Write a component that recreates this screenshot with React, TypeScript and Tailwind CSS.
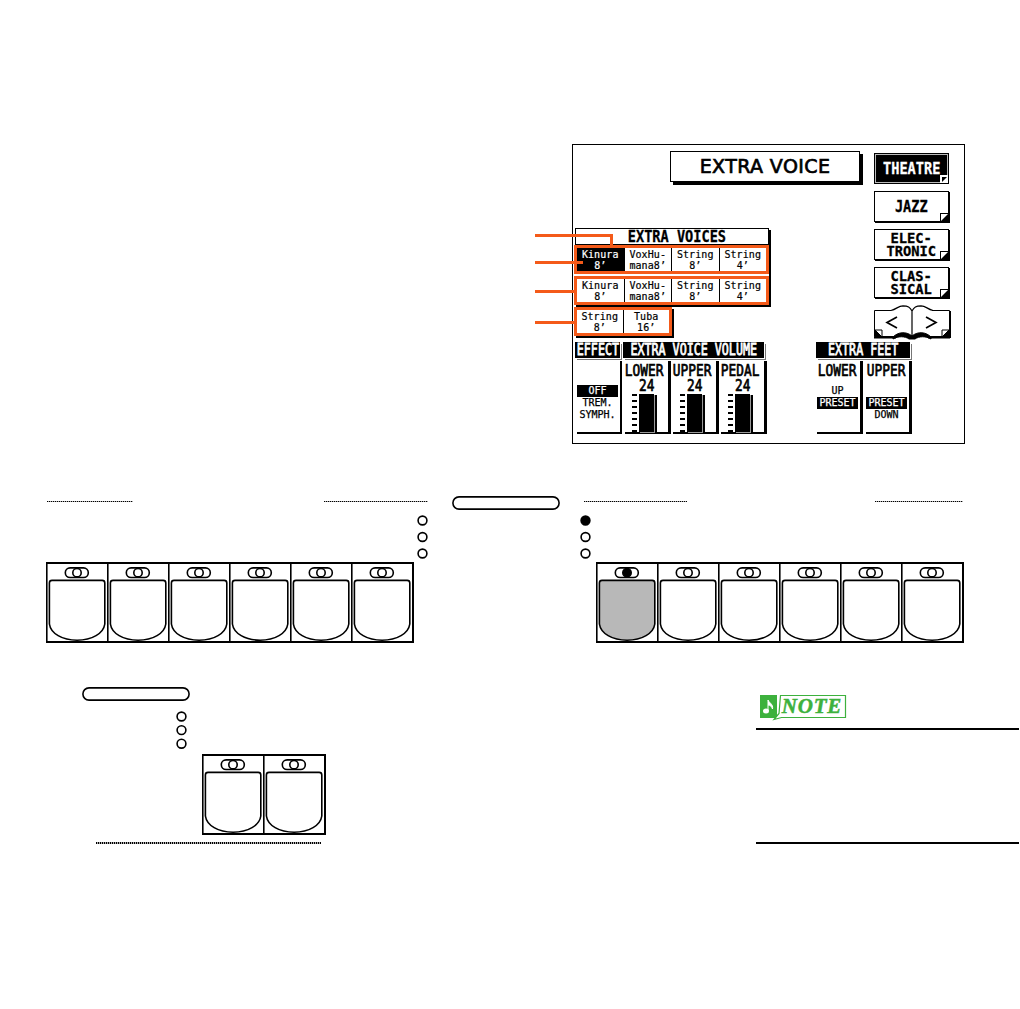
import clsx from "clsx";

const VOICE_ROWS = [
  [["Kinura", "8’"], ["VoxHu-", "mana8’"], ["String", "8’"], ["String", "4’"]],
  [["Kinura", "8’"], ["VoxHu-", "mana8’"], ["String", "8’"], ["String", "4’"]],
  [["String", "8’"], ["Tuba", "16’"]],
];

const MENU = [["THEATRE"], ["JAZZ"], ["ELEC-", "TRONIC"], ["CLAS-", "SICAL"]];

function VoiceRow({ row, index }: { row: string[][]; index: number }) {
  return (
    <div
      className={clsx(
        "flex h-[29px] border-[3px] border-[#f45a19] bg-white",
        index === 2
          ? "mt-[2px] w-[98px] shadow-[2px_2px_0_#000]"
          : "w-[195px]",
        index === 1 && "mt-[2px]"
      )}
    >
      {row.map((lines, i) => (
        <div
          key={i}
          className={clsx(
            "flex min-w-0 flex-1 flex-col items-center justify-center whitespace-nowrap text-[10px] leading-[11px] tracking-[0.1px] [-webkit-text-stroke:0.2px]",
            i > 0 && "border-l border-black",
            index === 0 && i === 0 && "bg-black text-white"
          )}
        >
          {lines.map((l) => (
            <span key={l}>{l}</span>
          ))}
        </div>
      ))}
    </div>
  );
}

function Corner({ dark }: { dark?: boolean }) {
  return (
    <svg className="absolute right-0 bottom-0" width="8" height="8">
      <rect width="8" height="8" fill={dark ? "#fff" : "#000"} />
      <rect x="1" y="1" width="7" height="7" fill="#fff" />
      <path d={dark ? "M2 2H7L2 7Z" : "M8 1V8H1Z"} fill="#000" />
    </svg>
  );
}

function MenuButton({ lines, active }: { lines: string[]; active?: boolean }) {
  return (
    <div
      className={clsx(
        "relative flex h-[31px] w-[75px] flex-col items-center justify-center border border-black font-bold",
        lines.length > 1 ? "text-[14px] leading-[13px]" : "text-[16px] leading-[16px]",
        active
          ? "bg-black text-white outline outline-offset-[-2px] outline-[#bbb]"
          : "bg-white shadow-[1px_1px_0_#000]"
      )}
    >
      {lines.map((l) => (
        <span
          key={l}
          className={clsx(
            "[-webkit-text-stroke:0.3px]",
            lines.length > 1 ? "scale-x-[0.98]" : "scale-x-[0.85]"
          )}
        >
          {l}
        </span>
      ))}
      <Corner dark={active} />
    </div>
  );
}

function Book() {
  return (
    <svg width="77" height="36" viewBox="0 0 77 36" fill="none" stroke="#000">
      <path d="M17 5.5H.5V31.5H20M58 5.5H75.5V31.5H56" />
      <path d="M76 6V33M0 32.5H22M54 32.5H76" strokeWidth="2" />
      <path d="M17 5.5C23 4 24 1 29 .8C34 .8 36 2 38 6C40 2 42 .8 47 .8C52 1 53 4 59 5.5M38 6V32" strokeWidth="1.2" />
      <path d="M19 32C24 27 32 26 38 31C44 26 52 27 57 32V34C52 31 45 31 41 34H35C31 31 24 31 19 34Z" fill="#000" />
      <path d="M23 12L13 17.5L23 23M52 12L62 17.5L52 23" strokeWidth="1.7" />
      <path d="M1 25H8V32" />
      <path d="M1 25L8 32H1Z" fill="#000" />
      <path d="M68 32V25H75" />
      <path d="M75 25V32H68Z" fill="#000" />
    </svg>
  );
}

function Heading({ text, className }: { text: string; className: string }) {
  return (
    <div
      className={clsx(
        "flex h-4 items-center justify-center bg-black text-[16px] text-white shadow-[1px_1px_0_#fff,2px_2px_0_#777]",
        className
      )}
    >
      <span className="scale-x-[0.73] whitespace-nowrap [-webkit-text-stroke:0.8px_white]">
        {text}
      </span>
    </div>
  );
}

function Title({ text }: { text: string }) {
  return (
    <div className="flex h-[15px] items-center justify-center text-[16px] leading-[15px]">
      <span className="scale-x-[0.8] [-webkit-text-stroke:0.7px_black]">{text}</span>
    </div>
  );
}

function Options({ items, selected }: { items: string[]; selected: string }) {
  return (
    <>
      {items.map((item) => (
        <div
          key={item}
          className={clsx(
            "mr-[2px] flex h-3 items-center justify-center text-[10px] leading-3 [-webkit-text-stroke:0.25px]",
            item === selected && "bg-black text-white"
          )}
        >
          {item}
        </div>
      ))}
    </>
  );
}

function Slider({ name }: { name: string }) {
  return (
    <div className="h-[73px] w-[46px] border-r-[3px] border-b-[2px] border-black pt-[2px]">
      <div className="mr-1">
        <Title text={name} />
      </div>
      <Title text="24" />
      <div className="mt-[1px] ml-[7px] flex gap-[2px]">
        <div className="flex flex-col gap-1">
          {[0, 1, 2, 3, 4, 5, 6].map((t) => (
            <i key={t} className="block h-[2px] w-[5px] bg-black" />
          ))}
        </div>
        <div className="h-[38px] w-[15px] bg-black shadow-[1px_1px_0_#999,3px_1px_0_#000]" />
      </div>
    </div>
  );
}

// Lines that tie the voice table to the labels on its left
function Leaders() {
  return (
    <svg
      className="absolute top-[84px] -left-[38px]"
      width="90"
      height="110"
      fill="none"
      stroke="#f45a19"
      strokeWidth="3"
    >
      <path d="M0 6.5H76.5V18M0 33.5H48M0 62.5H40M0 93.5H40" />
    </svg>
  );
}

function Display() {
  return (
    <section className="relative ml-[572px] h-[300px] w-[393px] border border-black font-['DejaVu_Sans_Mono',monospace]">
      <div className="flex h-[197px]">
        <div className="w-[301px] pt-[6px]">
          <h1 className="ml-[97px] flex h-[31px] w-[190px] items-center justify-center border border-black font-['DejaVu_Sans',sans-serif] text-[19px] tracking-[0.4px] shadow-[3px_3px_0_#000] [-webkit-text-stroke:0.7px_black]">
            EXTRA VOICE
          </h1>
          <div className="mt-[46px] ml-[1px] h-[77px] w-[195px] bg-white shadow-[2px_2px_0_#000]">
            <h2 className="ml-[1px] flex h-[17px] items-center justify-center border border-black bg-white text-[16px] font-bold">
              <span className="scale-x-[0.85] pl-3 whitespace-nowrap [-webkit-text-stroke:0.3px]">
                EXTRA VOICES
              </span>
            </h2>
            {VOICE_ROWS.map((row, i) => (
              <VoiceRow key={i} row={row} index={i} />
            ))}
          </div>
        </div>
        <div className="flex flex-col gap-[7px] pt-2">
          {MENU.map((lines, i) => (
            <MenuButton key={i} lines={lines} active={i === 0} />
          ))}
          <Book />
        </div>
      </div>

      <div className="flex pl-[2px]">
        <div className="w-[48px]">
          <Heading text="EFFECT" className="w-[45px]" />
          <div className="mt-[3px] ml-[2px] h-[73px] w-[45px] border-r-[2px] border-b-[2px] border-black pt-6">
            <Options items={["OFF", "TREM.", "SYMPH."]} selected="OFF" />
          </div>
        </div>
        <div className="w-[193px]">
          <Heading text="EXTRA VOICE VOLUME" className="w-[141px]" />
          <div className="mt-[3px] ml-[2px] flex gap-[2px]">
            <Slider name="LOWER" />
            <Slider name="UPPER" />
            <Slider name="PEDAL" />
          </div>
        </div>
        <div className="w-[98px]">
          <Heading text="EXTRA FEET" className="w-[94px]" />
          <div className="mt-[3px] ml-[1px] flex gap-[3px]">
            <div className="h-[73px] w-[46px] border-r-[3px] border-b-[2px] border-black pt-[2px]">
              <div className="mr-[3px]">
                <Title text="LOWER" />
              </div>
              <div className="pt-[7px]">
                <Options items={["UP", "PRESET"]} selected="PRESET" />
              </div>
            </div>
            <div className="h-[73px] w-[46px] border-r-[3px] border-b-[2px] border-black pt-[2px]">
              <div className="mr-[3px]">
                <Title text="UPPER" />
              </div>
              <div className="pt-[19px]">
                <Options items={["PRESET", "DOWN"]} selected="PRESET" />
              </div>
            </div>
          </div>
        </div>
      </div>
      <Leaders />
    </section>
  );
}

function Key({ on }: { on?: boolean }) {
  return (
    <svg width="61" height="80" fill="none" stroke="#000" strokeWidth="1.6">
      <path d="M.8 0V80" strokeWidth="1.6" />
      <rect x="19.3" y="5.9" width="23" height="9.6" rx="4.8" />
      <circle cx="31" cy="10.7" r="4.2" fill={on ? "#000" : "none"} />
      <path
        d="M3.4 21Q3.4 18.4 6 18.4H56.2Q58.8 18.4 58.8 21V62C57.5 71.5 46 78.2 31.1 78.2C16.2 78.2 4.7 71.5 3.4 62Z"
        fill={on ? "#b8b8b8" : "#fff"}
      />
    </svg>
  );
}

function Keys({ count, active }: { count: number; active?: number }) {
  return (
    <div className="flex h-[81px] border-y-2 border-r-2 border-black">
      {Array.from({ length: count }, (_, i) => (
        <div key={i} className="-mt-[2px] h-[80px]">
          <Key on={i === active} />
        </div>
      ))}
    </div>
  );
}

function Lamps({ pitch, on }: { pitch: number; on?: boolean }) {
  return (
    <svg width="11" height={pitch * 2 + 11} fill="none" stroke="#000" strokeWidth="1.6">
      {[0, 1, 2].map((i) => (
        <circle key={i} cx="5.5" cy={5.5 + i * pitch} r="4.4" fill={on && i === 0 ? "#000" : "none"} />
      ))}
    </svg>
  );
}

function Dots({ className }: { className: string }) {
  return (
    <div
      className={clsx(
        "bg-[repeating-linear-gradient(90deg,#000_0_1px,#aaa_1px_2px)]",
        className
      )}
    />
  );
}

function Pill() {
  return (
    <svg width="108" height="14" fill="none" stroke="#000" strokeWidth="1.6">
      <rect x=".9" y=".9" width="106.2" height="12.2" rx="6.1" />
    </svg>
  );
}

function NoteBadge() {
  return (
    <div className="ml-1 flex h-[26px] w-[86px]">
      <svg width="18" height="26">
        <rect y="1" width="17" height="23" fill="#3db13d" />
        <ellipse cx="6" cy="17" rx="3" ry="2.5" fill="#fff" />
        <path d="M8 17V6C9 9 13.5 10 12.5 15C11.5 12 10 11 8 11" fill="#fff" stroke="#fff" />
      </svg>
      <div className="relative flex h-[26px] w-[68px] items-center justify-center">
        <svg
          className="absolute inset-0 overflow-visible"
          width="68"
          height="26"
          fill="none"
          stroke="#3db13d"
          strokeWidth="1.2"
        >
          <path d="M2.5 1.5H67.5V23.5H3.5L-4 25.5L1 19.5Z" fill="#fff" />
        </svg>
        <span className="relative -mt-[2px] font-['Liberation_Serif',serif] text-[21px] leading-none font-bold tracking-[0.8px] text-[#3db13d] italic [-webkit-text-stroke:0.5px_#3db13d]">
          NOTE
        </span>
      </div>
    </div>
  );
}

export default function App() {
  return (
    <main className="h-[1009px] w-[1020px] overflow-hidden bg-white pt-[144px] text-black">
      <Display />

      <section className="mt-[52px]">
        <div className="flex h-[14px] items-center pl-[47px]">
          <Dots className="mr-[191px] mb-[3px] h-px w-[86px]" />
          <Dots className="mr-[24px] mb-[3px] h-px w-[104px]" />
          <Pill />
          <Dots className="mr-[188px] mb-[3px] ml-[24px] h-px w-[103px]" />
          <Dots className="mb-[3px] h-px w-[88px]" />
        </div>
        <div className="mt-[5px] flex gap-[152px] pl-[417px]">
          <Lamps pitch={16.5} />
          <Lamps pitch={16.5} on />
        </div>
        <div className="mt-[3px] flex gap-[182px] pl-[46px]">
          <Keys count={6} />
          <Keys count={6} active={0} />
        </div>
      </section>

      <section className="mt-11 flex justify-between pr-px">
        <div className="pl-[82px]">
          <Pill />
          <div className="mt-[10px] ml-[94px]">
            <Lamps pitch={13.6} />
          </div>
          <div className="mt-[5px] ml-[120px] flex">
            <Keys count={2} />
          </div>
          <Dots className="mt-[7px] ml-[14px] h-[2px] w-[225px]" />
        </div>
        <div className="w-[263px] pt-[7px]">
          <NoteBadge />
          <div className="mt-[8px] h-[116px] border-y-2 border-black" />
        </div>
      </section>
    </main>
  );
}
